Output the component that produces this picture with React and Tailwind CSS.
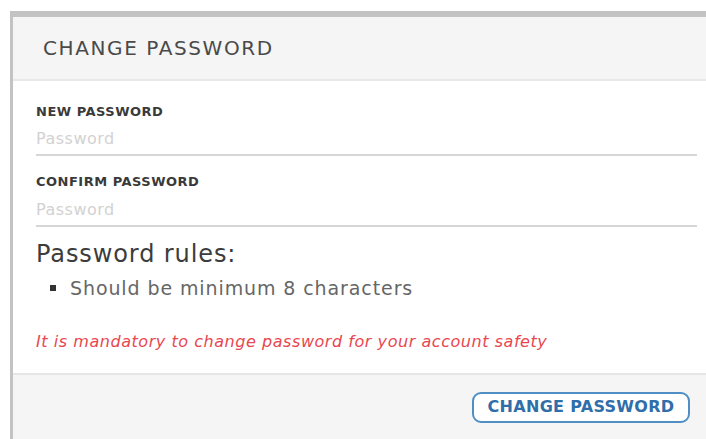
export default function App() {
  const font = { fontFamily: '"DejaVu Sans", "Open Sans", sans-serif' };
  return (
    <div className="w-[706px] h-[439px] bg-white pt-[11px] pl-[10px] overflow-hidden" style={font}>
      <div className="h-[428px] flex flex-col border-t-[6px] border-l-[3px] border-[#c3c3c3]">
        {/* header */}
        <div className="h-[64px] shrink-0 bg-[#f5f5f5] border-b-2 border-[#e8e8e8] pl-[30px] flex items-center">
          <h2 className="text-[20px] tracking-[1.6px] text-[#4a4a4a] leading-none">CHANGE PASSWORD</h2>
        </div>

        {/* form body */}
        <div className="flex-1 pl-[23px] pr-[9px] pt-[23px]">
          <label className="block text-[13px] tracking-[0.5px] font-bold text-[#3a3a3a] leading-[16px]">NEW PASSWORD</label>
          <input
            type="password"
            placeholder="Password"
            className="block w-full h-[36px] pt-[3px] border-b-2 border-[#d6d6d6] text-[16px] tracking-[0.5px] text-[#555] placeholder:text-[#d2d2d2] outline-none bg-transparent"
          />
          <label className="block mt-[18px] text-[13px] tracking-[0.5px] font-bold text-[#3a3a3a] leading-[16px]">CONFIRM PASSWORD</label>
          <input
            type="password"
            placeholder="Password"
            className="block w-full h-[37px] pt-[3px] border-b-2 border-[#d6d6d6] text-[16px] tracking-[0.5px] text-[#555] placeholder:text-[#d2d2d2] outline-none bg-transparent"
          />

          <h3 className="mt-[12px] text-[24px] tracking-[0.9px] text-[#3c3c3c] leading-[30px]">Password rules:</h3>
          <ul className="mt-[7px] pl-[14px]">
            <li className="flex items-center gap-[14px] text-[19px] tracking-[0.9px] text-[#666] leading-[24px]">
              <span className="w-[6px] h-[6px] bg-[#333] inline-block" />
              Should be minimum 8 characters
            </li>
          </ul>
          <p className="mt-[32px] text-[16px] tracking-[0.55px] italic text-[#e8474f] leading-[20px]">
            It is mandatory to change password for your account safety
          </p>
        </div>

        {/* footer */}
        <div className="h-[66px] shrink-0 bg-[#f5f5f5] border-t-2 border-[#e6e6e6] flex items-center justify-end pr-[16px]">
          <button className="h-[31px] w-[218px] rounded-[9px] border-2 border-[#4f8fc4] bg-white text-[16px] tracking-[0.3px] font-bold text-[#2f6ea8]">
            CHANGE PASSWORD
          </button>
        </div>
      </div>
    </div>
  );
}
